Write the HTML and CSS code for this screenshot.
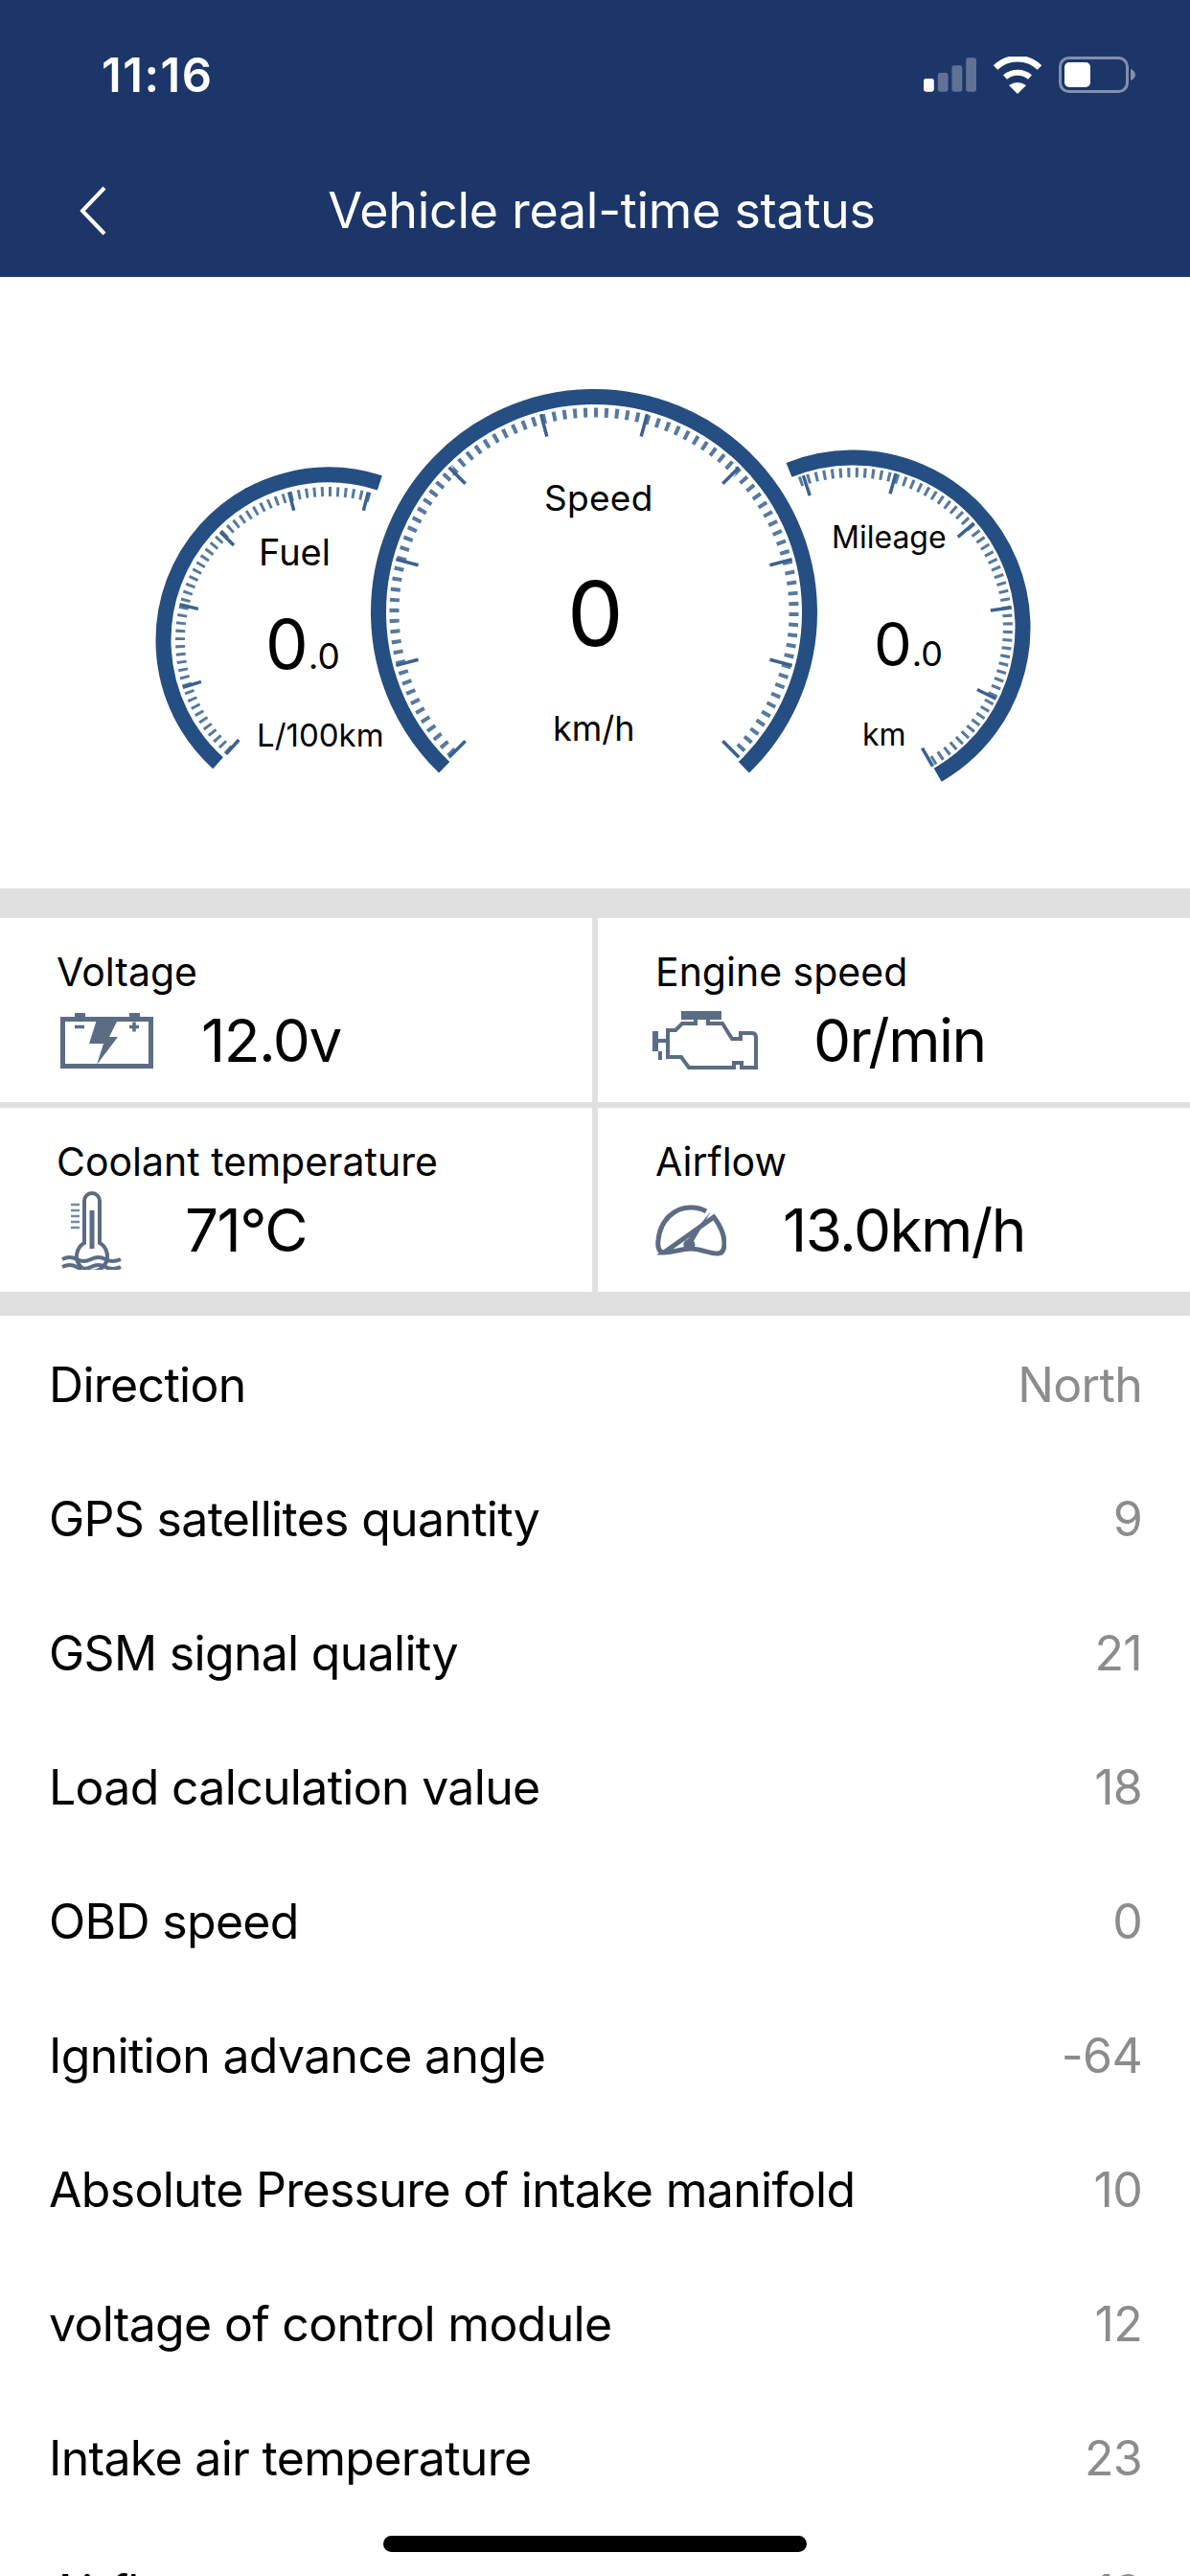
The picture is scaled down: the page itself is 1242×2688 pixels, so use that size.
FILE: index.html
```html
<!DOCTYPE html>
<html>
<head>
    <title>Vehicle real-time status</title>
    <meta charset="UTF-8">
    <link rel="stylesheet" href="styles.css">
</head>
<body>
    <div class="phone">
        <header class="top">
            <div class="status-bar">
                <span class="time">11:16</span>
                <div class="status-icons">
                    <svg class="ic-signal" viewBox="0 0 56 38">
                        <rect x="0" y="23" width="11" height="14" rx="2.500" fill="#fff"/>
                        <rect x="15" y="17" width="11" height="20" rx="2.500" fill="#fff" opacity=".3"/>
                        <rect x="30" y="9" width="11" height="28" rx="2.500" fill="#fff" opacity=".3"/>
                        <rect x="45" y="1" width="11" height="36" rx="2.500" fill="#fff" opacity=".3"/>
                    </svg>
                    <svg class="ic-wifi" viewBox="0 0 52 39">
                        <path d="M3 11.500A33 33 0 0 1 49 11.500" fill="none" stroke="#fff" stroke-width="6.500"/>
                        <path d="M13 21.500A20 20 0 0 1 39 21.500" fill="none" stroke="#fff" stroke-width="6"/>
                        <path d="M17 30Q26 24 35 30L26 39Z" fill="#fff"/>
                    </svg>
                    <svg class="ic-battery" viewBox="0 0 80 38">
                        <rect x="1.500" y="1.500" width="70" height="35" rx="9" fill="none" stroke="#fff" stroke-opacity=".45" stroke-width="3"/>
                        <rect x="6" y="6" width="27" height="26" rx="5" fill="#fff"/>
                        <path d="M75 13C78 14 80 16.500 80 19S78 24 75 25Z" fill="#fff" opacity=".45"/>
                    </svg>
                </div>
            </div>
            <div class="nav-bar">
                <svg class="ic-back" viewBox="0 0 28 52">
                    <path d="M26 2L3 26L26 50" fill="none" stroke="#fff" stroke-width="4"/>
                </svg>
                <h1 class="nav-title">Vehicle real-time status</h1>
            </div>
        </header>

        <section class="gauges">
            <!-- dials, coordinates are in page pixels minus the header height -->
            <svg class="dials" viewBox="0 0 1242 638">
                <g transform="translate(0 -289)">
                    <!-- fuel -->
                    <circle class="arc" cx="343" cy="668" r="172.500" pathLength="360" stroke-dasharray="156 204" transform="rotate(132 343 668)"/>
                    <path class="ticks" d="M239.300 783.200A155 155 0 0 1 390.900 520.600" pathLength="156" stroke-dasharray="1.100 1.900"/>
                    <path class="major" d="M379.300 532.800L384.400 513.500M306.700 532.800L301.600 513.500M244 569L229.900 554.900M206.900 635.400L187.500 630.700M209.900 711.300L190.800 717.400M249.300 772L236 786.900"/>
                    <text class="lbl" x="270" y="590" font-size="38">Fuel</text>
                    <text class="num" x="277" y="698" font-size="71">0<tspan font-size="37">.0</tspan></text>
                    <text class="lbl" x="268" y="779" font-size="33">L/100km</text>

                    <!-- speed -->
                    <circle class="arc" cx="620" cy="639" r="225" pathLength="360" stroke-dasharray="272 88" transform="rotate(134 620 639)"/>
                    <path class="ticks" d="M472.600 786.400A208.500 208.500 0 1 1 767.400 786.400" pathLength="270" stroke-dasharray="1.100 1.900"/>
                    <path class="major" d="M564.600 432.300L570.800 455.500M468.700 487.700L485.700 504.700M413.300 583.600L436.500 589.800M413.300 694.400L436.500 688.200M468.700 790.300L485.700 773.300M675.400 432.300L669.200 455.500M771.300 487.700L754.300 504.700M826.700 583.600L803.500 589.800M826.700 694.400L803.500 688.200M771.300 790.300L754.300 773.300"/>
                    <text class="lbl" x="568" y="533" font-size="37" letter-spacing=".3">Speed</text>
                    <text class="num" x="592" y="674" font-size="93">0</text>
                    <text class="lbl" x="577" y="773" font-size="36">km/h</text>

                    <!-- mileage -->
                    <circle class="arc" cx="890" cy="655" r="177.500" pathLength="360" stroke-dasharray="172 188" transform="rotate(-112 890 655)"/>
                    <path class="ticks" d="M834.600 502.800A162 162 0 0 1 971 795.300" pathLength="170" stroke-dasharray="1.100 1.900"/>
                    <path class="major" d="M845.200 517.100L838.400 496.200M929 515.300L935 494.100M999.800 560.300L1016.400 546M1033.800 636.900L1055.700 634.100M1019.900 719.500L1039.600 729.300M962.500 780.600L973.500 799.600"/>
                    <text class="lbl" x="868" y="572" font-size="32">Mileage</text>
                    <text class="num" x="912" y="695" font-size="63">0<tspan font-size="36">.0</tspan></text>
                    <text class="lbl" x="900" y="778" font-size="32">km</text>
                </g>
            </svg>
        </section>

        <section class="cells">
            <div class="cell">
                <div class="cell-name">Voltage</div>
                <div class="cell-main">
                    <svg class="ic ic-batt" viewBox="0 0 97 58">
                        <path d="M15 0H26V5H15ZM72 0H83V5H72Z" fill="#5b6c84"/>
                        <rect x="2.500" y="6.500" width="92" height="49" fill="none" stroke="#5b6c84" stroke-width="5"/>
                        <path d="M38 7H60L51 25H60L38 54L45 32H30Z" fill="#5b6c84"/>
                        <path d="M15 14.500H25M72 14.500H82M77 9.500V19.500" stroke="#5b6c84" stroke-width="3.500"/>
                    </svg>
                    <span class="cell-val">12.0v</span>
                </div>
            </div>
            <div class="cell">
                <div class="cell-name">Engine speed</div>
                <div class="cell-main">
                    <svg class="ic ic-engine" viewBox="0 0 110 62">
                        <path d="M45 6V13H31L24 20H16V48H30L38 59H85V54H93V59H108V28Q108 23 104 23H92V29H83L73 13H58V6" fill="none" stroke="#5b6c84" stroke-width="4"/>
                        <path d="M30 0H72V9H30ZM0 21H6V42H0ZM6 29H16V33H6ZM6 42H10V51H6Z" fill="#5b6c84"/>
                    </svg>
                    <span class="cell-val">0r/min</span>
                </div>
            </div>
            <div class="cell">
                <div class="cell-name">Coolant temperature</div>
                <div class="cell-main">
                    <svg class="ic ic-therm" viewBox="0 0 63 82">
                        <path d="M24 54V10A8 8 0 0 1 40 10V54A16 16 0 1 1 24 54Z" fill="none" stroke="#5b6c84" stroke-width="4"/>
                        <path d="M32 20V60" stroke="#5b6c84" stroke-width="5"/>
                        <path d="M10 14H19M10 20H19M10 26H19M10 32H19M10 38H19" stroke="#7a899d" stroke-width="2.500"/>
                        <path d="M1 71Q9 67 16 71T31 71T46 71T62 71M1 79Q9 75 16 79T31 79T46 79T62 79" fill="none" stroke="#5b6c84" stroke-width="4"/>
                    </svg>
                    <span class="cell-val">71°C</span>
                </div>
            </div>
            <div class="cell">
                <div class="cell-name">Airflow</div>
                <div class="cell-main">
                    <svg class="ic ic-dial" viewBox="0 0 74 54">
                        <path d="M9 50C4 50 2 45 3 37C5 16 20 3 37 3C43 3 48 4 53 7M61 13C67 21 72 30 72 40C72 47 70 51 65 51C55 51 48 46 37 46C26 46 19 50 9 50Z" fill="none" stroke="#5b6c84" stroke-width="5"/>
                        <path d="M58 7L40 38A6 6 0 1 1 34 36Z" fill="#5b6c84"/>
                    </svg>
                    <span class="cell-val">13.0km/h</span>
                </div>
            </div>
        </section>

        <section class="list">
            <div class="row"><span>Direction</span><span class="row-val">North</span></div>
            <div class="row"><span>GPS satellites quantity</span><span class="row-val">9</span></div>
            <div class="row"><span>GSM signal quality</span><span class="row-val">21</span></div>
            <div class="row"><span>Load calculation value</span><span class="row-val">18</span></div>
            <div class="row"><span>OBD speed</span><span class="row-val">0</span></div>
            <div class="row"><span>Ignition advance angle</span><span class="row-val">-64</span></div>
            <div class="row"><span>Absolute Pressure of intake manifold</span><span class="row-val">10</span></div>
            <div class="row"><span>voltage of control module</span><span class="row-val">12</span></div>
            <div class="row"><span>Intake air temperature</span><span class="row-val">23</span></div>
            <div class="row"><span>Airflow</span><span class="row-val">13</span></div>
        </section>

        <div class="home-bar"></div>
    </div>
</body>
</html>
```

FILE: styles.css
```css
html, body {
    margin: 0;
    padding: 0;
}
body {
    font-family: Inter, "Noto Sans", sans-serif;
    background-color: #fff;
    color: #000;
}
.phone {
    position: relative;
    width: 1242px;
    height: 2688px;
    overflow: hidden;
    background-color: #fff;
}

/* header */
.top {
    height: 289px;
    background-color: #1c3669;
    color: #fff;
}
.status-bar {
    display: flex;
    align-items: center;
    justify-content: space-between;
    height: 38px;
    padding: 59px 57px 0 106px;
}
.time {
    font-size: 49px;
    font-weight: 600;
    letter-spacing: 1.5px;
}
.status-icons {
    display: flex;
    align-items: center;
    gap: 17px;
}
.ic-signal { width: 55px; height: 38px; }
.ic-wifi { width: 52px; height: 39px; }
.ic-battery { width: 80px; height: 38px; }
.nav-bar {
    display: flex;
    align-items: center;
    justify-content: center;
    position: relative;
    height: 90px;
    margin-top: 77px;
    padding-left: 14px;
}
.ic-back {
    position: absolute;
    left: 83px;
    top: 20px;
    width: 28px;
    height: 52px;
}
.nav-title {
    margin: 0;
    font-size: 52px;
    font-weight: 400;
    letter-spacing: -.3px;
}

/* gauges */
.gauges {
    height: 638px;
}
.dials {
    display: block;
    width: 1242px;
    height: 638px;
}
.arc {
    fill: none;
    stroke: #254e82;
    stroke-width: 16;
}
.ticks {
    fill: none;
    stroke: #56799f;
    stroke-width: 10;
}
.major {
    fill: none;
    stroke: #3a6290;
    stroke-width: 3.500;
}
.lbl, .num {
    fill: #000;
}

/* cells */
.cells {
    display: grid;
    grid-template-columns: 618px 618px;
    grid-auto-rows: 192px;
    column-gap: 6px;
    row-gap: 6px;
    padding: 31px 0 25px;
    background-color: #e0e0e0;
}
.cell {
    background-color: #fff;
    padding-left: 59px;
}
.cell:nth-child(even) {
    padding-left: 60px;
}
.cell-name {
    margin-top: 34px;
    font-size: 41px;
    line-height: 44px;
}
.cell-main {
    display: flex;
    align-items: center;
    height: 70px;
    margin-top: 15px;
}
.cell-val {
    font-size: 62px;
    line-height: 70px;
    letter-spacing: -1.500px;
}
.ic {
    flex-shrink: 0;
}
.ic-batt { width: 97px; height: 58px; margin: 0 50px 0 4px; }
.ic-engine { width: 110px; height: 62px; margin: 0 58px 0 -3px; }
.ic-therm { width: 63px; height: 82px; margin: 0 66px 0 5px; }
.ic-dial { width: 74px; height: 54px; margin: 0 59px 0 0; }

/* list */
.list {
    padding: 2px 50px 0 51px;
}
.row {
    display: flex;
    align-items: center;
    justify-content: space-between;
    height: 140px;
    font-size: 50px;
    letter-spacing: -.7px;
}
.row-val {
    color: #8c8c8c;
}

.home-bar {
    position: absolute;
    left: 400px;
    top: 2646px;
    width: 442px;
    height: 17px;
    border-radius: 9px;
    background-color: #000;
}
```
